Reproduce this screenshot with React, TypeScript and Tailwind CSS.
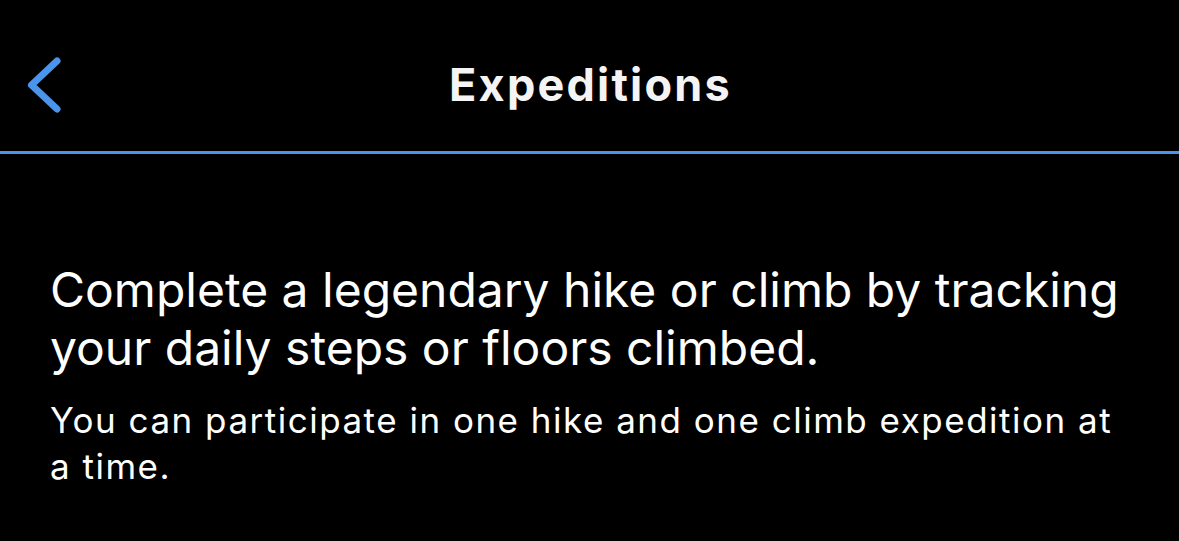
export default function App() {
  return (
    <div className="w-[1179px] h-[541px] bg-black text-white overflow-hidden" style={{ fontFamily: "Inter, 'Noto Sans', sans-serif" }}>
      <div className="h-[151px] pt-[53px]">
        <div className="h-[62px] grid grid-cols-[1fr_auto_1fr] items-center">
          <div className="pl-[24px] flex items-center">
            <svg width="42" height="62" viewBox="0 0 42 62" fill="none">
              <path d="M33 8 L7.5 32 L33 56" stroke="#4a94ec" strokeWidth="7" strokeLinecap="round" strokeLinejoin="round" />
            </svg>
          </div>
          <h1 className="text-[45px] leading-none font-bold tracking-[2.2px] pl-[2px] text-[#f4f4f4]">Expeditions</h1>
          <div />
        </div>
      </div>
      <div className="h-[3px] bg-[#4a94ec]" />
      <div className="px-[50px] pt-[107px]">
        <p className="text-[48px] leading-[58px]">Complete a legendary hike or climb by tracking your daily steps or floors climbed.</p>
        <p className="text-[35px] leading-[46px] mt-[20px] tracking-[1.5px]">You can participate in one hike and one climb expedition at a time.</p>
      </div>
    </div>
  );
}
